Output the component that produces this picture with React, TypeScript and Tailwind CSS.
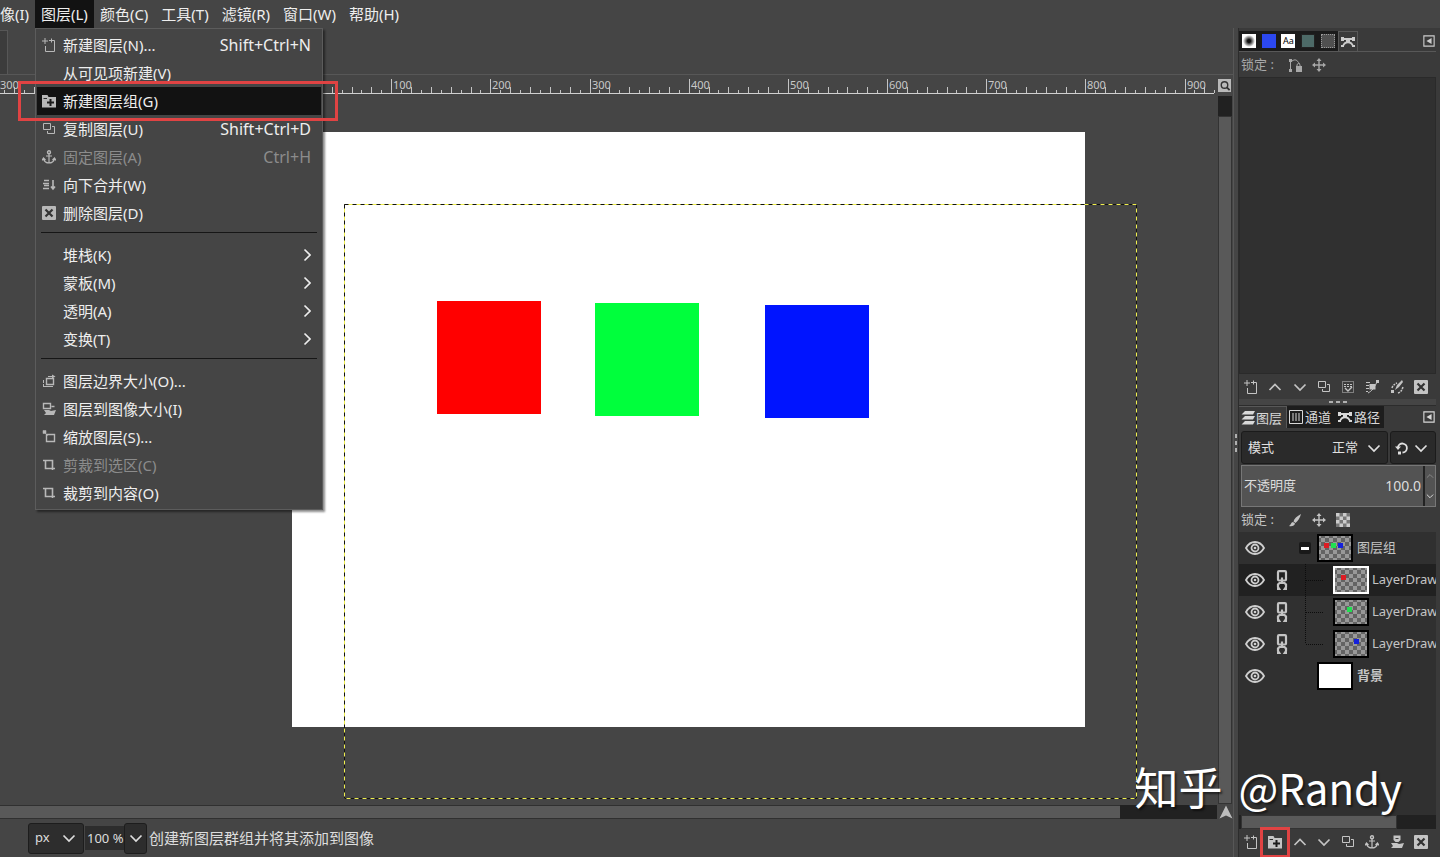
import type { ReactNode } from 'react'
import { clsx } from 'clsx'

const MENUS = ['图层(L)', '颜色(C)', '工具(T)', '滤镜(R)', '窗口(W)', '帮助(H)']

const ICONS: Record<string, ReactNode> = {
  new: <path d="M3 0v6M0 3h6M7 2.500h5.500v11h-9V8M9.500 0.500v4" />,
  group: (
    <>
      <path d="M0 1h5.500l1 2H14v10.500H0z" fill="currentColor" stroke="none" />
      <path d="M1.500 4.500H5" stroke="#2c2c2c" />
      <path d="M8.500 5v7M5 8.500h7" stroke="#1c1c1c" strokeWidth="2" />
    </>
  ),
  duplicate: <path d="M1.500 1.500h7v6h-7zM10 4.500h2.500v7h-7V9" />,
  anchor: (
    <>
      <circle cx="7" cy="2.200" r="1.500" strokeWidth="1.400" />
      <path d="M7 4v9M4 6h6M1.500 9c1 3 3 4 5.500 4s4.500-1 5.500-4M0 10.500l1.500-2.500 2 2M14 10.500l-1.500-2.500-2 2" strokeWidth="1.200" />
    </>
  ),
  merge: <path d="M2 2.500h5M1 5.500h6M2 7.500h5M1 10.500h6M11 2v9M9 8.500l2 2.500 2-2.500" strokeWidth="1.600" />,
  delete: (
    <>
      <rect x="0" y="0" width="14" height="14" rx="1" fill="currentColor" stroke="none" />
      <path d="M3.500 3.500l7 7M10.500 3.500l-7 7" stroke="#333" strokeWidth="2.200" />
    </>
  ),
  boundary: (
    <>
      <path d="M4.500 4.500h7v6h-7z" strokeWidth="1.400" />
      <path d="M6 2.500h5M1.500 6v3M1.500 10v3M1 12.500h10" />
      <path d="M10 0.500l3.500 2-3.500 2z" fill="currentColor" stroke="none" />
    </>
  ),
  toimage: (
    <>
      <path d="M1.500 1.500h7v5h-7zM9.500 4.500h3" strokeWidth="1.400" />
      <path d="M2 8h5l2 1 5-1-2 5H2l2-2z" fill="currentColor" stroke="none" />
    </>
  ),
  scale: (
    <>
      <path d="M4.500 4.500h8v7h-8z" strokeWidth="1.400" />
      <path d="M1 0.500h3v3H1zM3 3l3 3" fill="currentColor" strokeWidth="0.500" />
    </>
  ),
  crop: <path d="M1 2.500h9.500V12M3.500 2v8.500H13" strokeWidth="1.600" />,
  up: <path d="M1.500 10L7 4.500l5.500 5.500" strokeWidth="1.700" />,
  down: <path d="M1.500 4.500L7 10l5.500-5.500" strokeWidth="1.700" />,
  right: <path d="M7.500 1.500L13 7l-5.500 5.500" strokeWidth="1.600" />,
  move: (
    <>
      <path d="M7 2v10M2 7h10" strokeWidth="1.400" />
      <path d="M7 0l2.500 3h-5zM7 14l2.500-3h-5zM0 7l3-2.500v5zM14 7l-3-2.500v5z" fill="currentColor" stroke="none" />
    </>
  ),
  brush: <path d="M13 1C9 3 6 6 5.500 8.500l2 1.500C10 8 12 5 13 1zM5 9c-2 0-2 3-4 4 3 0.500 5.500 0 6-2.500z" fill="currentColor" stroke="none" />,
  pathlock: (
    <>
      <path d="M2.500 3v9M4 3c3-2 5-1.500 7.500 3M9 8V6.500q1.500-2 3 0V8" />
      <path d="M1 1h3v3H1zM1 11h3v3H1zM8 8h6v6H8z" fill="currentColor" stroke="none" />
    </>
  ),
  paths: (
    <>
      <path d="M1 4h12M2 11C4 6 10 6 12 11" strokeWidth="1.800" />
      <path d="M0 2h3v4H0zM11 2h3v4h-3zM5 3h4v4H5zM0 10h3v2H0zM11 10h3v2h-3z" fill="currentColor" stroke="none" />
    </>
  ),
  layers: <path d="M4 0h10l-2 3.500H0.500zM4 5h10l-2 3.500H0.500zM4 10h10l-2 3.500H0.500z" fill="currentColor" stroke="none" />,
  channels: <path d="M0.500 0.500h13v13h-13zM4 3v8M7 3v8M10 3v8" />,
  selection: (
    <>
      <path d="M1.500 1.500h11v11h-11z" strokeDasharray="1 1" />
      <path d="M3 4.500h8M3 6.500h8" strokeDasharray="2 1" />
      <path d="M4 8l3 3 4-4" strokeWidth="1.400" />
    </>
  ),
  frompath: (
    <>
      <path d="M1 2.500h4M1 5.500h3M1 8.500h3M1 11.500h2" />
      <path d="M3 13c4-2 6-5 9-11" />
      <path d="M4.500 4h6v5.500h-6zM11 0h3v3h-3z" fill="currentColor" stroke="none" />
    </>
  ),
  stroke: (
    <>
      <path d="M2 8c1-3 3-4 5-5M8 13c3-1 4-3 5-6" strokeDasharray="2 1" strokeWidth="1.500" />
      <path d="M12 0L7 5 5 10l4-3 4-5zM1 10h3v3H1z" fill="currentColor" stroke="none" />
    </>
  ),
  stamp: (
    <>
      <path d="M3.500 0.500h7V5l-2 2h-3l-2-2z" fill="currentColor" stroke="none" />
      <path d="M1 8h6l2 1 5-1-2 5H1l2-2z" fill="currentColor" stroke="none" />
      <path d="M5.500 3.500h3" stroke="#3a3a3a" />
    </>
  ),
  reset: (
    <>
      <path d="M3 7V6a4.500 4.500 0 1 1 4.500 5.500" strokeWidth="1.800" />
      <path d="M0 5.500h6L3 9zM3 10.500h3v3H3z" fill="currentColor" stroke="none" />
    </>
  ),
  collapse: (
    <>
      <path d="M1 1h12v12H1z" strokeWidth="1.300" />
      <path d="M10 3.500v7L4 7z" fill="currentColor" stroke="none" />
    </>
  ),
  magnifier: (
    <>
      <path d="M0 0h14v14H0z" fill="#b9b9b9" stroke="none" />
      <circle cx="7" cy="6.500" r="3.500" stroke="#333" strokeWidth="1.500" />
      <path d="M9.500 9l3 3" stroke="#333" strokeWidth="2" />
    </>
  ),
  navigate: <path d="M7 0.500L13.500 13.500 7 10.500 0.500 13.500z" fill="currentColor" stroke="none" />,
}

function Icon({ name, className = 'size-3.5' }: { name: string; className?: string }) {
  return (
    <svg viewBox="0 0 14 14" className={clsx('shrink-0', className)} fill="none" stroke="currentColor" aria-hidden="true">
      {ICONS[name]}
    </svg>
  )
}

type Entry = { label: string; icon?: string; keys?: string; sub?: boolean; disabled?: boolean; active?: boolean }

const LAYER_MENU: Entry[][] = [
  [
    { label: '新建图层(N)...', icon: 'new', keys: 'Shift+Ctrl+N' },
    { label: '从可见项新建(V)' },
    { label: '新建图层组(G)', icon: 'group', active: true },
    { label: '复制图层(U)', icon: 'duplicate', keys: 'Shift+Ctrl+D' },
    { label: '固定图层(A)', icon: 'anchor', keys: 'Ctrl+H', disabled: true },
    { label: '向下合并(W)', icon: 'merge' },
    { label: '删除图层(D)', icon: 'delete' },
  ],
  [
    { label: '堆栈(K)', sub: true },
    { label: '蒙板(M)', sub: true },
    { label: '透明(A)', sub: true },
    { label: '变换(T)', sub: true },
  ],
  [
    { label: '图层边界大小(O)...', icon: 'boundary' },
    { label: '图层到图像大小(I)', icon: 'toimage' },
    { label: '缩放图层(S)...', icon: 'scale' },
    { label: '剪裁到选区(C)', icon: 'crop', disabled: true },
    { label: '裁剪到内容(O)', icon: 'crop' },
  ],
]

function LayerMenu() {
  return (
    <div className="absolute left-0 top-full z-20 w-[288px] border border-[#5c5c5c] bg-[#454545] py-0.5 shadow-[2px_2px_2px_rgba(0,0,0,0.45)]">
      {LAYER_MENU.map((group, i) => (
        <div key={i} className={clsx(i > 0 && 'pt-[5px]')}>
          {i > 0 && <hr className="mx-[5px] mb-2 border-t border-[#161616]" />}
          {group.map((entry) => (
            <div key={entry.label} className="relative px-px">
              <button
                type="button"
                disabled={entry.disabled}
                className={clsx(
                  'flex h-7 w-full items-center pl-[5px] pr-2.5 text-left text-[15px] leading-7',
                  entry.active && 'bg-[#121212]',
                  entry.disabled ? 'text-[#8c8c8c]' : 'text-[#eeeeee]',
                )}
              >
                <span className="flex w-[21px] text-[#b8b8b8]">{entry.icon && <Icon name={entry.icon} />}</span>
                <span className="flex-1">{entry.label}</span>
                {entry.keys && <span className="text-base leading-7">{entry.keys}</span>}
                {entry.sub && <Icon name="right" />}
              </button>
              {entry.active && (
                <span className="pointer-events-none absolute -bottom-1.5 -left-[18px] -right-4 -top-1.5 border-[3px] border-[#e04343]" />
              )}
            </div>
          ))}
        </div>
      ))}
    </div>
  )
}

function MenuBar() {
  return (
    <nav className="flex h-7 items-stretch text-[15px] leading-7 text-[#eeeeee]">
      <button type="button" className="w-[35px] shrink-0 whitespace-nowrap text-left">像(I)</button>
      {MENUS.map((label, i) => (
        <div key={label} className={clsx('relative', i === 0 && 'bg-[#121212]')}>
          <button type="button" className={clsx('whitespace-nowrap pl-1.5', i === 0 ? 'pr-1.5' : 'pr-[7px]')}>{label}</button>
          {i === 0 && <LayerMenu />}
        </div>
      ))}
    </nav>
  )
}

const UNIT = 99.17
const ORIGIN = 292

function Ruler() {
  const ticks = Array.from({ length: 123 }, (_, i) => i - 29)
  return (
    <svg className="h-[19px] min-w-0 flex-1" aria-hidden="true">
      <path d="M0 18.500H1214" stroke="#d0d0d0" />
      {ticks.map((n) => {
        const x = Math.round(ORIGIN + (n * UNIT) / 10) + 0.5
        const y = n % 10 === 0 ? 4 : n % 2 === 0 ? 12 : 15
        return x < 1215 ? <path key={n} d={`M${x} ${y}V18`} stroke="#c4c4c4" /> : null
      })}
      {[-3, 1, 2, 3, 4, 5, 6, 7, 8, 9].map((n) => (
        <text key={n} x={Math.round(ORIGIN + n * UNIT) + (n < 0 ? 6 : 2)} y="14" fill="#c8c8c8" fontSize="11">
          {Math.abs(n * 100)}
        </text>
      ))}
    </svg>
  )
}

function Canvas() {
  return (
    <div className="relative min-w-0 flex-1 overflow-hidden bg-[#454545]">
      <div className="absolute left-[292px] top-[38px] h-[595px] w-[793px] bg-white" />
      <div className="absolute left-[437px] top-[207px] h-[113px] w-[104px] bg-[#ff0000]" />
      <div className="absolute left-[595px] top-[209px] h-[113px] w-[104px] bg-[#00ff3c]" />
      <div className="absolute left-[765px] top-[211px] h-[113px] w-[104px] bg-[#0014ff]" />
      <svg className="absolute left-[344px] top-[110px] h-[596px] w-[794px]" fill="none" aria-hidden="true">
        <path d="M0.500 0.500H792.500V594.500H0.500z" stroke="#f0f050" />
        <path d="M0.500 0.500H792.500V594.500H0.500z" stroke="#111111" strokeDasharray="4 4" />
      </svg>
    </div>
  )
}

function StatusBar() {
  return (
    <footer className="flex h-[37px] items-center pl-7 pb-px text-[#dddddd]">
      <div className="relative mr-px flex h-[31px] w-[56px] items-center rounded-[3px] border border-[#1d1d1d] bg-[#2d2d2d]">
        <select aria-label="单位" className="w-full appearance-none bg-transparent pl-1.5 text-[13px] outline-none">
          <option>px</option>
        </select>
        <Icon name="down" className="pointer-events-none absolute right-[7px] size-3.5" />
      </div>
      <input aria-label="缩放" defaultValue="100 %" className="h-6 w-[39px] bg-[#2d2d2d] pl-0.5 text-[13px] outline-none" />
      <button type="button" aria-label="缩放选项" className="flex h-[31px] w-[23px] items-center justify-center rounded-[3px] border border-[#1d1d1d] bg-[#2d2d2d]">
        <Icon name="down" />
      </button>
      <span className="pl-0.5 text-[15px] leading-7">创建新图层群组并将其添加到图像</span>
    </footer>
  )
}

function ImageWindow() {
  return (
    <main className="flex min-w-0 flex-1 flex-col border-r border-[#575757]">
      <div className="flex h-[47px] border-b border-[#575757] pt-0.5">
        <div className="w-2 border-r border-t border-[#575757] bg-[#3c3c3c]" />
      </div>
      <div className="flex">
        <Ruler />
        <button type="button" aria-label="缩放图像" className="flex w-4 items-center pt-0.5 pl-px">
          <Icon name="magnifier" className="size-[13px]" />
        </button>
      </div>
      <div className="flex flex-1">
        <Canvas />
        <div className="flex w-4 flex-col pl-px pt-0.5">
          <div className="h-5 w-3.5 bg-[#212121]" />
          <div className="w-3.5 flex-1 border border-[#333333] bg-[#595959]" />
        </div>
      </div>
      <div className="flex h-4 items-center">
        <div className="flex h-3.5 flex-1 bg-[#212121]">
          <div className="w-[92%] border-y border-[#303030] bg-[#595959]" />
        </div>
        <button type="button" aria-label="导航" className="w-4 pl-0.5 text-[#bdbdbd]">
          <Icon name="navigate" />
        </button>
      </div>
      <StatusBar />
    </main>
  )
}

function ToolRow({ icons, marked }: { icons: string[]; marked?: string }) {
  return (
    <div className="flex h-[25px] items-center justify-between pl-[5px] pr-2 text-[#c4c4c4]">
      {icons.map((name) => (
        <button key={name} type="button" aria-label={name} className="relative flex">
          <Icon name={name} />
          {marked === name && <span className="pointer-events-none absolute -inset-x-2 -bottom-[9px] -top-2 border-[3px] border-[#e04343]" />}
        </button>
      ))}
    </div>
  )
}

function PathDock() {
  return (
    <section>
      <div className="flex h-5 items-stretch">
        <div className="flex w-[99px] items-center justify-around bg-[#1b1b1b]">
          <span className="size-3.5 bg-[radial-gradient(circle,#111_15%,#fff_60%)]" />
          <span className="size-3.5 bg-[#2c48f0]" />
          <span className="size-3.5 bg-white text-center text-[9px] leading-3.5 text-black">Aa</span>
          <span className="size-3.5 border border-[#222222] bg-[#4d6a67]" />
          <span className="size-3.5 border border-dotted border-[#999999] bg-[#505050]" />
        </div>
        <button type="button" aria-label="路径" className="flex w-5 items-center justify-center border-x border-t border-[#585858] text-[#cccccc]">
          <Icon name="paths" />
        </button>
        <button type="button" aria-label="配置此标签" className="ml-auto mr-px flex items-center text-[#cccccc]">
          <Icon name="collapse" className="size-3" />
        </button>
      </div>
      <div className="flex h-[26px] items-center gap-2.5 border-t border-[#585858] pl-0.5 text-[13px] text-[#a8a8a8]">
        <span className="w-[37px] whitespace-nowrap">锁定 :</span>
        <Icon name="pathlock" />
        <Icon name="move" />
      </div>
      <div className="h-[297px] border border-[#2a2a2a] bg-[#303030]" />
      <ToolRow icons={['new', 'up', 'down', 'duplicate', 'selection', 'frompath', 'stroke', 'delete']} />
    </section>
  )
}

type Dot = { x: number; color: string }

const R = { x: 8, color: '#dc1c24' }
const G = { x: 14, color: '#20e050' }
const B = { x: 21, color: '#1420dc' }

const LAYERS: { name: string; dots: Dot[]; child?: boolean; open?: boolean; active?: boolean; blank?: boolean }[] = [
  { name: '图层组', dots: [{ ...R, x: 7 }, G, B], open: true },
  { name: 'LayerDraw', dots: [R], child: true, active: true },
  { name: 'LayerDraw', dots: [G], child: true },
  { name: 'LayerDraw', dots: [B], child: true },
  { name: '背景', dots: [], blank: true },
]

function Eye() {
  return (
    <svg viewBox="0 0 20 16" className="h-4 w-5 shrink-0" fill="none" stroke="#cfcfcf" strokeWidth="1.800" aria-hidden="true">
      <path d="M1 8c4.500-8 13.500-8 18 0-4.500 8-13.500 8-18 0z" />
      <circle cx="10" cy="8" r="3.500" />
      <circle cx="10" cy="8" r="1.300" fill="#cfcfcf" stroke="none" />
    </svg>
  )
}

function Chain() {
  return (
    <svg viewBox="0 0 12 20" className="h-5 w-3" fill="none" stroke="#c4c4c4" strokeWidth="2.200" aria-hidden="true">
      <rect x="2" y="1.200" width="8" height="9.300" rx="1" />
      <path d="M6 7.500v6M1 18.800h2.200L2 17v-2.500L3.500 13h5l1.500 1.500V17l-1.200 1.800H11" />
    </svg>
  )
}

function Thumb({ dots, blank, active }: { dots: Dot[]; blank?: boolean; active?: boolean }) {
  return (
    <svg viewBox="0 0 36 28" className="h-7 w-9 shrink-0" aria-hidden="true">
      <defs>
        <pattern id="checks" width="8" height="8" patternUnits="userSpaceOnUse">
          <path d="M0 0h8v8H0z" fill="#636363" />
          <path d="M0 0h4v4H0zM4 4h4v4H4z" fill="#989898" />
        </pattern>
      </defs>
      <path d="M1 1h34v26H1z" fill={blank ? '#ffffff' : 'url(#checks)'} stroke={active ? '#ffffff' : '#000000'} strokeWidth="2" />
      {dots.map((dot) => (
        <rect key={dot.x} x={dot.x} y="9" width="5" height="5" fill={dot.color} />
      ))}
    </svg>
  )
}

function LayerList() {
  return (
    <ul className="flex-1 overflow-hidden bg-[#303030] text-[#c4c4c4]">
      {LAYERS.map((layer, i) => (
        <li key={i} className={clsx('flex h-8 items-center pl-1.5', layer.active && 'bg-[#212121]')}>
          <Eye />
          <span className="flex w-[34px] shrink-0 justify-center">{layer.child && <Chain />}</span>
          {layer.child ? (
            <svg className="h-8 w-[34px] shrink-0" stroke="#0c0c0c" strokeDasharray="1 1" fill="none" aria-hidden="true">
              <path d={i === 3 ? 'M6.500 0V16M7 16.500H24' : 'M6.500 0V32M7 16.500H24'} />
            </svg>
          ) : (
            <span className="flex w-[18px] shrink-0">
              {layer.open && (
                <button type="button" aria-label="折叠" className="flex size-3 items-center rounded-xs bg-[#191919] px-0.5">
                  <i className="h-[3px] w-full bg-white" />
                </button>
              )}
            </span>
          )}
          <Thumb dots={layer.dots} blank={layer.blank} active={layer.active} />
          <span className={clsx('whitespace-nowrap text-[13px]', layer.child ? 'pl-[3px]' : 'pl-1', layer.blank && 'font-bold')}>{layer.name}</span>
        </li>
      ))}
    </ul>
  )
}

function LayerDock() {
  return (
    <section className="flex flex-1 flex-col">
      <div className="flex h-[22px] text-[13px] leading-5 text-[#d8d8d8]">
        <button type="button" className="flex w-[48px] items-center justify-between whitespace-nowrap border-r border-t border-[#585858] pl-0.5 pr-1">
          <Icon name="layers" className="size-3.5" />图层
        </button>
        <button type="button" className="flex w-[49px] items-center gap-0.5 whitespace-nowrap bg-[#1d1d1d] px-0.5">
          <Icon name="channels" />通道
        </button>
        <button type="button" className="flex w-[48px] items-center gap-0.5 whitespace-nowrap bg-[#1d1d1d] px-0.5">
          <Icon name="paths" />路径
        </button>
        <button type="button" aria-label="配置此标签" className="ml-auto mr-px flex items-center">
          <Icon name="collapse" className="size-3" />
        </button>
      </div>
      <div className="mt-[3px] flex h-[33px] gap-0.5 pl-0.5 text-[#e0e0e0]">
        <label className="relative flex flex-1 items-center rounded-[3px] border border-[#1b1b1b] bg-[#2a2a2a] pl-1.5 text-[13px]">
          模式
          <select className="ml-auto mr-7 appearance-none bg-transparent outline-none">
            <option>正常</option>
          </select>
          <Icon name="down" className="pointer-events-none absolute right-1.5 size-3.5" />
        </label>
        <button type="button" aria-label="模式组" className="flex w-[46px] items-center justify-between rounded-[3px] border border-[#1b1b1b] bg-[#2a2a2a] pl-1 pr-[7px]">
          <Icon name="reset" />
          <Icon name="down" />
        </button>
      </div>
      <div className="ml-0.5 mt-px flex h-[42px] border border-[#777777] bg-[#535353] text-[13px] text-[#dddddd]">
        <label htmlFor="opacity" className="flex flex-1 items-center whitespace-nowrap pl-0.5">不透明度</label>
        <input id="opacity" defaultValue="100.0" className="w-[60px] bg-transparent pr-0.5 text-right text-sm outline-none" />
        <div className="flex w-3 flex-col items-center justify-around border-l-2 border-[#222222]">
          <button type="button" aria-label="增加" className="text-[#888888]"><Icon name="up" className="size-2" /></button>
          <button type="button" aria-label="减少"><Icon name="down" className="size-2" /></button>
        </div>
      </div>
      <div className="flex h-[25px] items-center gap-2.5 pl-0.5 text-[13px] text-[#c4c4c4]">
        <span className="w-[37px] whitespace-nowrap">锁定 :</span>
        <Icon name="brush" />
        <Icon name="move" />
        <svg viewBox="0 0 12 12" className="size-3.5" aria-hidden="true">
          <path d="M0 0h12v12H0z" fill="#777777" />
          <path d="M0 0h3v3H0zM6 0h3v3H6zM3 3h3v3H3zM9 3h3v3H9zM0 6h3v3H0zM6 6h3v3H6zM3 9h3v3H3zM9 9h3v3H9z" fill="#cccccc" />
        </svg>
      </div>
      <LayerList />
      <div className="flex h-3.5 bg-[#212121] pl-0.5">
        <div className="w-4/5 border border-[#333333] bg-[#5a5a5a]" />
      </div>
      <ToolRow icons={['new', 'group', 'up', 'down', 'duplicate', 'anchor', 'stamp', 'delete']} marked="group" />
    </section>
  )
}

function Grip({ vertical }: { vertical?: boolean }) {
  return (
    <div className={clsx('flex items-center justify-center gap-[3px]', vertical ? 'w-1 flex-col' : 'h-[7px] border-b border-[#2c2c2c] bg-[#454545]')}>
      {[0, 1, 2].map((n) => (
        <span key={n} className={clsx('bg-[#b0b0b0]', vertical ? 'h-1 w-0.5' : 'h-0.5 w-1')} />
      ))}
    </div>
  )
}

export default function App() {
  return (
    <div className="relative flex min-h-screen flex-col overflow-hidden bg-[#454545] font-['Noto_Sans','Noto_Sans_CJK_SC',sans-serif]">
      <MenuBar />
      <div className="flex flex-1">
        <ImageWindow />
        <Grip vertical />
        <aside className="flex w-[202px] shrink-0 flex-col border-l border-[#2c2c2c] bg-[#3a3a3a] pb-[3px] pr-1 pt-[3px]">
          <PathDock />
          <Grip />
          <LayerDock />
        </aside>
      </div>
      <p className="pointer-events-none absolute bottom-[38px] right-[38px] z-30 flex items-baseline gap-4 whitespace-nowrap font-['Noto_Sans_CJK_SC',sans-serif] text-[44px] leading-[64px] text-white [text-shadow:2px_2px_2px_rgba(0,0,0,0.5)]">
        <span>知乎</span>
        <span className="text-[42px]">@Randy</span>
      </p>
    </div>
  )
}
